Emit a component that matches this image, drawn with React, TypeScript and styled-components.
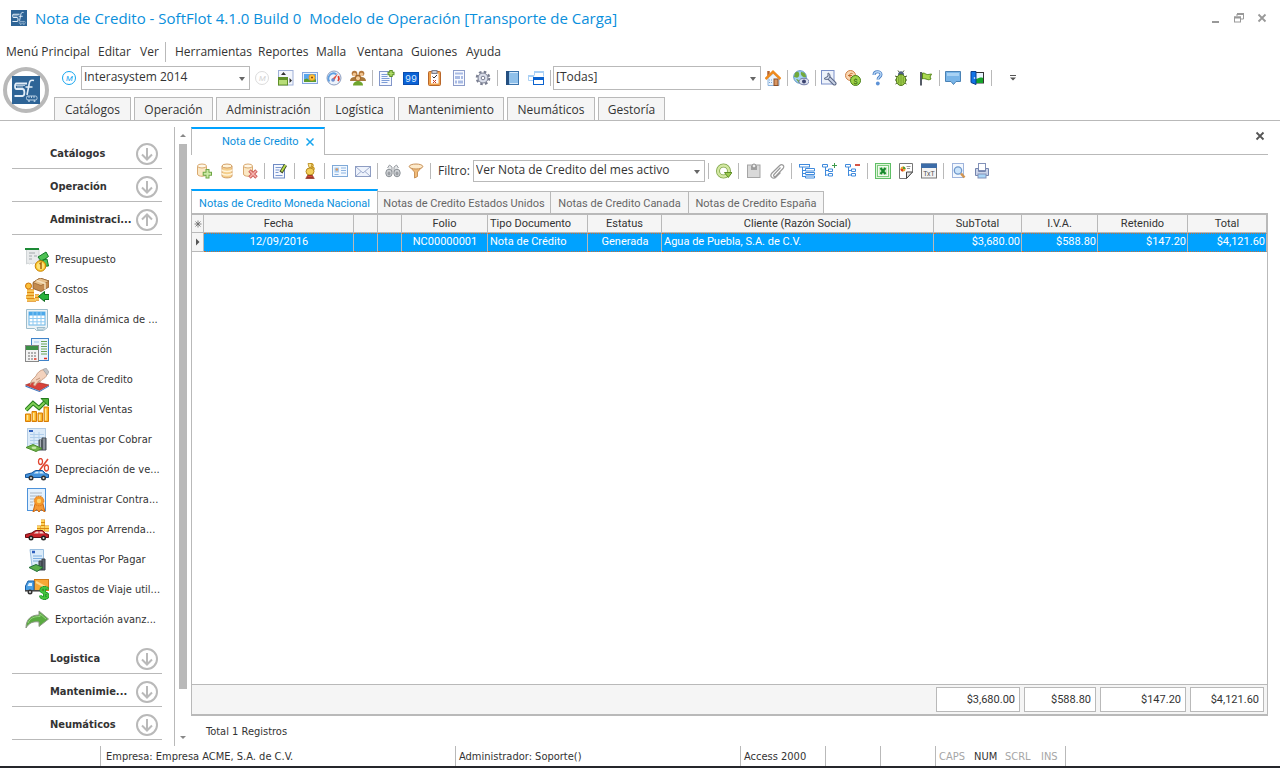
import React from "react";
import styled, { createGlobalStyle } from "styled-components";

const line = "#b9b9b9";
const blue = "#00a2ff";
const link = "#0a8fdc";
const ink = "#333333";
const ui = `"Open Sans", "Noto Sans", sans-serif`;
const side = `"DejaVu Sans Condensed", "DejaVu Sans", sans-serif`;
const gridFont = `Roboto, "Liberation Sans", sans-serif`;

const Global = createGlobalStyle`
  *, *::before, *::after { box-sizing: border-box; }
  body { margin: 0; background: #fff; color: ${ink}; font: 12px/16px ${ui}; }
  button, select { font: inherit; color: inherit; }
`;

/* ---------- drawings ---------- */

const art: Record<string, React.ReactNode> = {
  clock: (
    <>
      <circle cx="8" cy="8" r="6.500" fill="#fff" stroke="#16a5ef" />
      <text x="8.500" y="11" fontSize="8" textAnchor="middle" fill="#16a5ef" fontFamily="Roboto" fontStyle="italic">M</text>
    </>
  ),
  clockOff: (
    <>
      <circle cx="8" cy="8" r="6.500" fill="#fff" stroke="#dcdcdc" />
      <text x="8.500" y="11" fontSize="8" textAnchor="middle" fill="#d5d5d5" fontFamily="Roboto" fontStyle="italic">M</text>
    </>
  ),
  panelArrows: (
    <>
      <rect x="0.500" y="0.500" width="14.500" height="14.500" fill="#f3f6fc" stroke="#9fb0d8" />
      <rect x="0.500" y="7.500" width="9" height="7.500" fill="#b7dd78" stroke="#5f8f28" />
      <path d="M1 9h8" stroke="#5f8f28" strokeWidth="2" />
      <path d="M3 5l2.500-3L8 5zM11.500 8v5l2.500-2.500z" fill="#333" />
    </>
  ),
  photo: (
    <>
      <rect x="0.500" y="2.500" width="15" height="11" fill="#eaf3ff" stroke="#86a7e0" />
      <rect x="2" y="4" width="12" height="8" fill="#58a6ee" />
      <path d="M2 12V9.500l3-1 3 2 2-2 4 1V12z" fill="#5e9c2e" />
      <circle cx="10" cy="7.500" r="3.300" fill="#f0a01e" />
      <circle cx="10" cy="7.500" r="2.400" fill="#ffc843" />
      <circle cx="10" cy="7.500" r="1" fill="#8d3d09" />
    </>
  ),
  gauge: (
    <>
      <circle cx="8" cy="8" r="7" fill="#edf3fb" stroke="#8c9dc0" />
      <path d="M3.500 11.500a5 5 0 0 1 7-7" fill="none" stroke="#5f9fe0" strokeWidth="1.800" />
      <path d="M12.300 6a5 5 0 0 1-.3 5" fill="none" stroke="#df3b2d" strokeWidth="1.800" />
      <path d="M12 3.500L6 9l2 2z" fill="#e8523f" />
      <circle cx="7" cy="10" r="1.800" fill="#6d8fd0" />
    </>
  ),
  people: (
    <>
      <circle cx="4.500" cy="3.500" r="2.800" fill="#b57a3f" />
      <circle cx="11.500" cy="3.500" r="2.800" fill="#b57a3f" />
      <circle cx="4.500" cy="4.500" r="1.800" fill="#f2c48f" />
      <circle cx="11.500" cy="4.500" r="1.800" fill="#f2c48f" />
      <path d="M0 11c0-5 8-5 8-1 0-4 8-4 8 1z" fill="#a9773a" />
      <circle cx="8" cy="7.500" r="3" fill="#a4682b" />
      <circle cx="8" cy="8.300" r="2" fill="#f6cf9d" />
      <path d="M3 15.500c0-6 10-6 10 0z" fill="#6fa52e" />
    </>
  ),
  docPlus: (
    <>
      <rect x="0.500" y="1.500" width="12" height="14" fill="#f5f8ff" stroke="#8296c9" />
      <path d="M2.500 4.500h6M2.500 6.500h6M2.500 8.500h8M2.500 10.500h8M2.500 12.500h6" stroke="#7c9cd6" />
      <path d="M12 0v7M8.500 3.500h7" stroke="#5b8f27" strokeWidth="3.500" />
      <path d="M12 1v5M9.500 3.500h5" stroke="#b2dd6b" strokeWidth="1.500" />
    </>
  ),
  digits: (
    <>
      <rect x="0.500" y="2.500" width="15" height="12" fill="#0a62d6" stroke="#0a4cae" />
      <text x="8" y="12" fontSize="10" textAnchor="middle" fill="#d3e7ff" fontFamily="Liberation Mono">99</text>
    </>
  ),
  checklist: (
    <>
      <rect x="1.500" y="1.500" width="12" height="14" rx="1" fill="#efa04a" stroke="#b8662a" />
      <rect x="4" y="3.500" width="7.500" height="10" fill="#fff" />
      <rect x="5" y="0.500" width="5" height="3" fill="#c9cdd6" stroke="#7c828f" />
      <path d="M5.500 6.500L7 8l3-3" fill="none" stroke="#333" />
      <path d="M6 10l3 3M9 10l-3 3" stroke="#c83a25" />
    </>
  ),
  form: (
    <>
      <rect x="2.500" y="0.500" width="11" height="15" fill="#f8faff" stroke="#8c9cc9" />
      <path d="M4 3.500h8" stroke="#a9bbe4" strokeWidth="2" />
      <path d="M4 6h5v3H4zM10 6h2v3h-2zM4 10.500h2v3H4zM7 10.500h5v3H7z" fill="#a9bbe4" />
    </>
  ),
  gear: (
    <>
      <circle cx="8" cy="8" r="6.300" fill="none" stroke="#787d90" strokeWidth="2" strokeDasharray="2.600 2.350" />
      <circle cx="8" cy="8" r="5" fill="#dadeea" stroke="#787d90" />
      <circle cx="8" cy="8" r="1.800" fill="#fff" stroke="#787d90" />
    </>
  ),
  book: (
    <>
      <rect x="2.500" y="1.500" width="12" height="13" fill="#8fc0ea" stroke="#3a73ac" />
      <rect x="2" y="1" width="3" height="14" fill="#244f80" />
      <path d="M6 2.500h8M6 13.500h8" stroke="#d4e8fa" />
    </>
  ),
  windows: (
    <>
      <path d="M6.500 5.500v-4h9v5M5 10.500H.5v-5H6" fill="none" stroke="#a9d0f5" />
      <path d="M6 2h10M0 6h6" fill="none" stroke="#a9d0f5" strokeWidth="2" />
      <rect x="5.500" y="7.500" width="10" height="7" fill="#fff" stroke="#0a62cf" />
      <rect x="5" y="7" width="11" height="3" fill="#0a62cf" />
    </>
  ),
  home: (
    <>
      <path d="M3 8v7.500h11V8L8.500 3z" fill="#e9f3fd" stroke="#8db4de" />
      <rect x="9" y="9" width="4" height="6.500" fill="#d89562" stroke="#8c4f27" />
      <path d="M3.500 1v5" stroke="#b5642f" strokeWidth="2.500" />
      <path d="M0.500 9L8 1.800 15.500 9" fill="none" stroke="#ee8a1e" strokeWidth="2.500" />
      <path d="M4 10h3M4 12.500h3" stroke="#79a7d8" strokeDasharray="1 1" />
    </>
  ),
  globeEye: (
    <>
      <circle cx="7" cy="7" r="6.300" fill="#a3d2f3" stroke="#5f94c4" />
      <path d="M2 3c3-3 5 0 4 3s-4 1-5 1zM8 2c4 0 5 3 5 5-3 1-6-2-5-5zM3 9c3 0 4 3 3 4z" fill="#71a93a" />
      <ellipse cx="11" cy="11.500" rx="5" ry="3.300" fill="#dce1f0" stroke="#6f7aa6" />
      <circle cx="11" cy="11.500" r="2" fill="#3c4470" />
    </>
  ),
  wrench: (
    <>
      <rect x="0.500" y="0.500" width="12.500" height="13.500" fill="#edf2fb" stroke="#7b90c8" />
      <path d="M8 8l5.500 5.500" stroke="#5a6684" strokeWidth="4" strokeLinecap="round" />
      <path d="M8 8l5.500 5.500" stroke="#c8d2e6" strokeWidth="2" strokeLinecap="round" />
      <path d="M3 8.500c2 2 6 1 6-2.500 0-1.500-1-3-2-3l0 3-2 1.500z" fill="#c8d2e6" stroke="#5a6684" />
    </>
  ),
  coins: (
    <>
      <circle cx="5.500" cy="5.500" r="5" fill="#f9d6b0" stroke="#cf8046" />
      <path d="M7.500 3.500c-4-1-4 5 0 4M3 5.500h4" fill="none" stroke="#c06a2f" />
      <circle cx="10.500" cy="10.500" r="5" fill="#9ed44a" stroke="#487f17" />
      <text x="10.500" y="13.500" fontSize="8" textAnchor="middle" fill="#2e5c0d" fontFamily="Roboto">$</text>
    </>
  ),
  help: (
    <>
      <path d="M5 5c0-4.500 7-4 7-.5 0 2.500-3 2.500-3 5" fill="none" stroke="#4a7fc4" strokeWidth="3" />
      <path d="M5 5c0-4.500 7-4 7-.5 0 2.500-3 2.500-3 5" fill="none" stroke="#b7d6f6" strokeWidth="1.400" />
      <circle cx="8.800" cy="13.500" r="1.900" fill="#5d92d6" />
    </>
  ),
  bug: (
    <>
      <path d="M2 6l3 1M14 6l-3 1M2 10h3M14 10h-3M2.500 14l3-2M13.500 14l-3-2M5 .5l1.500 2M11 .5l-1.500 2" stroke="#4d5a33" />
      <path d="M5 5c0-5 6-5 6 0z" fill="#4f6080" />
      <ellipse cx="8" cy="10" rx="4.800" ry="5.500" fill="#a8d350" stroke="#4f7a18" />
      <path d="M8 5v10M5.800 6.500v7M10.200 6.500v7" stroke="#6b9a2b" />
    </>
  ),
  flag: (
    <>
      <path d="M4 2v13.500" stroke="#555b66" strokeWidth="2" />
      <path d="M5.500 3c3 0 3 1.500 5 1.500s3-.5 4-.5l-1.500 3 1 2c-3 1.500-3 .5-5 0s-3-.5-3.500 0z" fill="#a9d84f" stroke="#57881b" />
    </>
  ),
  chat: (
    <>
      <path d="M0.500 1.500h15v10H11l-2.500 3-2.500-3H.5z" fill="#79b5e8" stroke="#4a82b5" />
      <path d="M2 3h12v3H2z" fill="#a8d2f4" />
    </>
  ),
  door: (
    <>
      <rect x="6" y="2.500" width="8.500" height="10.500" fill="#eaf5ff" stroke="#333" />
      <path d="M7 9c3-1 5-2 7-1v5H7z" fill="#17a32b" />
      <path d="M2 1.500h5v13l-5-2z" fill="#1173e6" stroke="#0a3f8d" />
      <circle cx="5.500" cy="8" r="0.800" fill="#fff" />
    </>
  ),
  dbAdd: (
    <>
      <path d="M1.500 3v8c0 3 9 3 9 0V3" fill="#fbe8c4" stroke="#d9a970" />
      <ellipse cx="6" cy="3" rx="4.500" ry="2" fill="#fff8e8" stroke="#d9a970" />
      <path d="M11.500 6v9.500M6.700 10.800h9.300" stroke="#6ea644" strokeWidth="4" />
      <path d="M11.500 7v7.500M7.700 10.800h7.300" stroke="#cbe9a5" strokeWidth="2" />
    </>
  ),
  db: (
    <>
      <path d="M3 3v10c0 2.500 10 2.500 10 0V3" fill="#f5cf8c" stroke="#d3a068" />
      <path d="M3 6.500c0 2.500 10 2.500 10 0M3 10c0 2.500 10 2.500 10 0" fill="none" stroke="#fff3d9" strokeWidth="1.500" />
      <ellipse cx="8" cy="3" rx="5" ry="2" fill="#fff4da" stroke="#d3a068" />
    </>
  ),
  dbDel: (
    <>
      <path d="M1.500 3v8c0 3 9 3 9 0V3" fill="#fbe8c4" stroke="#d9a970" />
      <ellipse cx="6" cy="3" rx="4.500" ry="2" fill="#fff8e8" stroke="#d9a970" />
      <path d="M7.500 7.500l7 7M14.500 7.500l-7 7" stroke="#cf5f5a" strokeWidth="3.500" />
      <path d="M8 8l6 6M14 8l-6 6" stroke="#f6b3ae" strokeWidth="1.500" />
    </>
  ),
  edit: (
    <>
      <rect x="1.500" y="1.500" width="11" height="13.500" fill="#f5f8ff" stroke="#6f8bc4" />
      <path d="M3.500 4.500h6M3.500 7h4M3.500 9.500h3M3.500 12.500h7" stroke="#7d9ad0" />
      <path d="M13.500 2L9 9.500" stroke="#3f4a2b" strokeWidth="3.500" />
      <path d="M13.500 2L9.500 8.500" stroke="#b9dd4c" strokeWidth="1.800" />
    </>
  ),
  stamp: (
    <>
      <path d="M8 0.500c4 0 4 3 1 3.500 4 0 4 3 1 3.500" fill="none" stroke="#c9971b" strokeWidth="1.300" />
      <path d="M6 .5h4l-1 4H7z" fill="#f8df85" stroke="#b78a1d" strokeWidth=".8" />
      <ellipse cx="8" cy="8.500" rx="4" ry="3.500" fill="#f3d05c" stroke="#b78a1d" />
      <path d="M5.500 12.500h5l1 2h-7z" fill="#d94a35" stroke="#8c2617" strokeWidth=".8" />
      <path d="M3.500 15.300h9" stroke="#8c2617" />
    </>
  ),
  card: (
    <>
      <rect x="0.500" y="2.500" width="15" height="11" fill="#f2f8fe" stroke="#7fa9d8" />
      <rect x="2.500" y="4.500" width="4.500" height="5" fill="#a8ccf0" />
      <circle cx="4.800" cy="6.500" r="1.300" fill="#d59762" />
      <path d="M9 5h5M9 7.500h5M9 10h5M2.500 11.500h4" stroke="#8db4e2" />
    </>
  ),
  mail: (
    <>
      <rect x="0.500" y="3.500" width="15" height="10" fill="#eef3fc" stroke="#8e9dc2" />
      <path d="M1 4l7 6 7-6M1 13l5-4.500M15 13l-5-4.500" fill="none" stroke="#9fadce" />
    </>
  ),
  binoculars: (
    <>
      <path d="M2.500 5l2-3 2.500 2v5M13.500 5l-2-3L9 4v5" fill="#e6e8ea" stroke="#9a9ea3" />
      <ellipse cx="4" cy="10" rx="3.200" ry="3.800" fill="#cfd2d6" stroke="#8b9095" />
      <ellipse cx="12" cy="10" rx="3.200" ry="3.800" fill="#cfd2d6" stroke="#8b9095" />
      <ellipse cx="4" cy="10.500" rx="1.500" ry="2" fill="#9a9ea3" />
      <ellipse cx="12" cy="10.500" rx="1.500" ry="2" fill="#9a9ea3" />
    </>
  ),
  funnel: (
    <>
      <path d="M1.500 3.500L6.500 9v6l3-1.500V9l5-5.500z" fill="#f1bb78" stroke="#c8925a" />
      <ellipse cx="8" cy="3.500" rx="6.800" ry="2.500" fill="#fdeacb" stroke="#c8925a" />
    </>
  ),
  refresh: (
    <>
      <circle cx="7.500" cy="8" r="5.500" fill="none" stroke="#7da348" strokeWidth="4" />
      <circle cx="7.500" cy="8" r="5.500" fill="none" stroke="#d3e8a2" strokeWidth="2.400" />
      <path d="M8.500 9.500H16l-3.700 5z" fill="#9bcb50" stroke="#5f8f28" />
    </>
  ),
  clipboard: (
    <>
      <rect x="1.500" y="2" width="12.500" height="12.500" fill="#d9d9d9" stroke="#a5a5a5" />
      <path d="M5 3h6v4H5z" fill="#a0a0a0" />
      <circle cx="8" cy="3" r="2" fill="#ececec" stroke="#8f8f8f" />
    </>
  ),
  clip: (
    <path
      d="M11.500 4.500L5 11.500c-1.200 1.200.6 3 1.800 1.700L14 5.500c2.300-2.500-1-5.300-3.300-3L3 10c-3 3.300 1.200 7 4 4l4.500-4.500"
      fill="none" stroke="#9a9a9a" strokeWidth="1.200"
    />
  ),
  tree: (
    <>
      <path d="M3.500 4v10M3.500 7.500h3M3.500 10.500h3M3.500 13.500h3" fill="none" stroke="#3f8add" />
      <rect x="0.500" y="1.500" width="10" height="2.500" fill="#fff" stroke="#3f8add" />
      <path d="M6.500 5.500h9v2.500h-9zM6.500 9.500h9v2h-9zM6.500 13h9v2h-9z" fill="#fff" stroke="#3f8add" />
    </>
  ),
  treeAdd: (
    <>
      <path d="M3.500 4v9M3.500 7.500h3M3.500 12h3" fill="none" stroke="#3f8add" />
      <path d="M.5 1.500h5V4h-5zM6.500 6h4v2.500h-4zM6.500 10.500h4V13h-4z" fill="#fff" stroke="#3f8add" />
      <path d="M12.500 0v5M10 2.500h5" stroke="#3c9a4a" />
    </>
  ),
  treeDel: (
    <>
      <path d="M3.500 4v9M3.500 7.500h3M3.500 12h3" fill="none" stroke="#3f8add" />
      <path d="M.5 1.500h5V4h-5zM6.500 6h4v2.500h-4zM6.500 10.500h4V13h-4z" fill="#fff" stroke="#3f8add" />
      <path d="M10 2h5" stroke="#d2412f" strokeWidth="1.800" />
    </>
  ),
  excel: (
    <>
      <rect x="0.500" y="0.500" width="15" height="15" fill="#dff5da" stroke="#5fbf66" />
      <rect x="2.500" y="2.500" width="11" height="11" fill="#f3fbf1" stroke="#7ccb7d" />
      <rect x="4" y="4" width="8" height="8" fill="#cdebc6" />
      <path d="M5.500 5l5 6M10.500 5l-5 6" stroke="#178a2d" strokeWidth="2.200" />
    </>
  ),
  report: (
    <>
      <path d="M1.500 0.500h13V9L8.500 15.500h-7z" fill="#fff" stroke="#777" />
      <path d="M14.500 9h-6v6.500z" fill="#e6e6e6" stroke="#444" />
      <path d="M8.500 3.500h4M9 5.500h3" stroke="#999" />
      <circle cx="5" cy="6" r="2.500" fill="#f0a02e" />
      <path d="M5 6V3.500A2.500 2.500 0 0 1 7.500 6z" fill="#4ba03c" />
      <path d="M5 6v2.500A2.500 2.500 0 0 1 2.500 6z" fill="#d8402c" />
    </>
  ),
  txt: (
    <>
      <rect x="0.500" y="1" width="15" height="14" fill="#f4f4f4" stroke="#777" />
      <rect x="0" y="0.500" width="16" height="4.500" fill="#3c6ca8" />
      <text x="8" y="12.500" fontSize="7" textAnchor="middle" fill="#555" fontFamily="Roboto">TxT</text>
    </>
  ),
  preview: (
    <>
      <rect x="1.500" y="0.500" width="11" height="14" fill="#f3f8fe" stroke="#9fb4dc" />
      <circle cx="7" cy="7.500" r="3.700" fill="#cbe4fa" stroke="#6f98cc" strokeWidth="1.300" />
      <path d="M10 10.500L13.500 14.500" stroke="#d09452" strokeWidth="2.500" />
    </>
  ),
  printer: (
    <>
      <rect x="4.500" y="0.500" width="7" height="7" fill="#fff" stroke="#8291b8" />
      <path d="M1.500 5.500h3v3h7v-3h3v7h-13z" fill="#ccd5ea" stroke="#7484ad" />
      <rect x="4" y="11" width="8" height="4" fill="#a8d5f7" stroke="#8291b8" />
    </>
  ),
};

const sideArt: Record<string, React.ReactNode> = {
  budget: (
    <>
      <path d="M1.500 1v15l1.500-1 1.500 1 1.500-1 1.500 1 1.500-1 5 1V1z" fill="#e9ebec" stroke="#d0d4d6" />
      <path d="M0 1h14" stroke="#1d8a36" strokeWidth="2" />
      <path d="M4 5h6M4 8h3M9 8h3M4 11h3" stroke="#a2a8ac" />
      <path d="M13 9l8-5 2.500 4.500-7 5zM14 13l8-2 1.500 7-8 .5z" fill="#4fc255" stroke="#117a26" />
      <circle cx="15.500" cy="18" r="5.300" fill="#fbc92d" stroke="#c98208" />
      <circle cx="15.500" cy="18" r="3.700" fill="#fde17a" />
      <path d="M14.500 16l1.500-1v6" fill="none" stroke="#a9650a" strokeWidth="1.500" />
    </>
  ),
  costs: (
    <>
      <path d="M8 4.500L15 0l9 3v6l-8 4.500-8-3z" fill="#c38a4e" stroke="#8a5726" strokeWidth=".8" />
      <path d="M8 4.500l8 3 8-4.500-9-3z" fill="#e8c18c" stroke="#8a5726" strokeWidth=".6" />
      <path d="M11.500 2.500l8.500 3v6" fill="none" stroke="#f5e0bd" strokeWidth="1.500" />
      <circle cx="3.500" cy="8" r="3" fill="#fcbf3b" stroke="#cf7608" />
      <path d="M2 13h7M2 16h7M1 19h8M2 22h9M10 18h4M10 21h4" stroke="#e18a14" strokeWidth="3.500" />
      <path d="M2 13h7M2 16h7M1 19h8M2 22h9M10 18h4M10 21h4" stroke="#fdd76b" strokeWidth="1.700" />
      <path d="M13.500 18.500l6-5v3H24v5h-4.500v2z" fill="#28b23a" stroke="#0d6b1c" />
    </>
  ),
  grid: (
    <>
      <path d="M1.500 1.500h21v18l-4 3h-7l-2-2h-8z" fill="#eef4f7" stroke="#9dbccb" />
      <rect x="4" y="4" width="16" height="13" fill="#fff" stroke="#68b4e5" />
      <rect x="4" y="4" width="16" height="3.500" fill="#4ba8ea" />
      <path d="M4 10.500h16M4 13.800h16M8 4v13M12 4v13M16 4v13" stroke="#8fcaf2" />
      <path d="M12 19.500h8l-2.500 2.500H13z" fill="#d4e3ea" stroke="#9dbccb" />
    </>
  ),
  invoice: (
    <>
      <rect x="6.500" y="0.500" width="17" height="22" fill="#eaf4fd" stroke="#3f83c9" />
      <path d="M9 4h5" stroke="#b7d4f0" strokeWidth="1.500" />
      <path d="M16 3.500h6M16 6h6M16 8.500h6M16 11h6M16 13.500h6M16 16h6" stroke="#6aa457" />
      <path d="M19 20.500h3" stroke="#dd2f23" strokeWidth="1.500" />
      <rect x="0.500" y="7.500" width="13" height="16" fill="#f3f3f3" stroke="#888" />
      <rect x="1" y="8" width="12" height="4" fill="#3b8f45" />
      <path d="M3 15h2M6 15h2M9 15h2M3 18h2M6 18h2M9 18h2M3 21h2M6 21h2" stroke="#999" strokeWidth="1.500" />
      <path d="M9 21h2.500" stroke="#e03524" strokeWidth="1.500" />
    </>
  ),
  hand: (
    <>
      <path d="M0.500 17l9-3.500L24 17l-9.500 5.500z" fill="#d8423a" stroke="#9b2018" strokeWidth=".6" />
      <path d="M0.500 17.500l14 5.500 9.500-5.500v1L14.500 24 .5 18.700z" fill="#3b74c0" />
      <path d="M5 16l2-4 4-4c1-3 4-6 8-6.500l3 5c-1 3-3 4-5 5-1 2-3 3-5 3.500l-2 3-1.500-1 1-3-3 .5-1 2z" fill="#f3d2bd" stroke="#c29479" strokeWidth=".8" />
      <path d="M11 12l4-2M12.500 14l3-2" stroke="#c29479" />
      <path d="M18 1.500l3-1.500 3 4-2 3z" fill="#c3c4c7" stroke="#97989b" strokeWidth=".6" />
    </>
  ),
  chart: (
    <>
      <path d="M0.500 16h5v7.500h-5zM7 13.500h4.500v10H7zM13 15h4.500v8.500H13zM19 9h4.500v14.500H19z" fill="#fbb425" stroke="#d87c06" />
      <path d="M2.500 17v5M8.700 15v7M14.700 16.500v6M20.700 10.500v12" stroke="#ffe79a" strokeWidth="1.500" />
      <path d="M1 12l7-7 6 5 6-6" fill="none" stroke="#237b1c" strokeWidth="4" />
      <path d="M1 12l7-7 6 5 6-6" fill="none" stroke="#80d056" strokeWidth="2" />
      <path d="M16 0.500h7.500V8z" fill="#50b33a" stroke="#237b1c" />
    </>
  ),
  receivable: (
    <>
      <rect x="2.500" y="0.500" width="18" height="19" fill="#dcebf9" stroke="#b3cbe3" />
      <path d="M4 3h4" stroke="#2f5fbd" strokeWidth="2" />
      <path d="M5 6.500h14M5 9.500h14M5 12.500h9M5 15.500h8M9 4v13M14 4v12" stroke="#b2cfeb" />
      <path d="M14 12h3v10h-3zM17 10h4v12h-4z" fill="#737b84" stroke="#474e56" />
      <path d="M15.500 12v9M19 10.500v11" stroke="#a9b0b7" />
      <path d="M1 19.500l7-3 9 4-6 3z" fill="#70b548" stroke="#4b8d2d" />
      <ellipse cx="9" cy="19.800" rx="2.500" ry="1.200" fill="#c4e6a8" />
    </>
  ),
  depreciation: (
    <>
      <path d="M23 1L14 13" stroke="#e0452f" strokeWidth="1.500" />
      <ellipse cx="15.500" cy="3.500" rx="2" ry="3" fill="none" stroke="#e0452f" strokeWidth="1.300" />
      <ellipse cx="21.500" cy="10" rx="2" ry="3" fill="none" stroke="#e0452f" strokeWidth="1.300" />
      <path d="M0.500 19.500v-3l6-1.500 4-2.500h7l3 3 3 1v3z" fill="#4392db" stroke="#14569d" />
      <path d="M8.500 15.500l3-2h2v2zM14.500 13.500H17l2 2h-4.500z" fill="#d7ecfb" />
      <circle cx="6" cy="20" r="2.500" fill="#333" /><circle cx="6" cy="20" r="1" fill="#ddd" />
      <circle cx="18.500" cy="20" r="2.500" fill="#333" /><circle cx="18.500" cy="20" r="1" fill="#ddd" />
    </>
  ),
  contract: (
    <>
      <rect x="2.500" y="0.500" width="18" height="22" fill="#e6f2fd" stroke="#4d92da" />
      <path d="M5 5h12M5 8h12M5 11h4M5 14h3M5 17h3" stroke="#a9b5c2" />
      <path d="M10 16l-2 8 4-2.500 2 2.500 2-2.500L20 24l-2-8z" fill="#f59a35" stroke="#cc650c" />
      <circle cx="14" cy="13" r="4.800" fill="#f79a2b" stroke="#d9761a" strokeDasharray="1.500 .8" />
      <circle cx="14" cy="13" r="2.200" fill="#ffd36a" />
    </>
  ),
  lease: (
    <>
      <path d="M12 12h4M12 9h4M16 12h4M16 9h4M16 6h4M16 3h4M20 12h4M20 9h4" stroke="#d98a12" strokeWidth="3" />
      <path d="M12 12h3.500M12 9h3.500M16 12h3.500M16 9h3.500M16 6h3.500M16 3h3.500M20 12h4M20 9h4" stroke="#fdd560" strokeWidth="1.800" />
      <path d="M0.500 19.500v-3l6-1.500 4-2.500h7l3 3 3 1v3z" fill="#c9242b" stroke="#6f0c12" />
      <path d="M8.500 15.500l3-2h2v2zM14.500 13.500H17l2 2h-4.500z" fill="#f1d4d4" />
      <circle cx="6" cy="20" r="2.500" fill="#222" /><circle cx="6" cy="20" r="1" fill="#ddd" />
      <circle cx="18.500" cy="20" r="2.500" fill="#222" /><circle cx="18.500" cy="20" r="1" fill="#ddd" />
    </>
  ),
  payable: (
    <>
      <path d="M5 1.500h13.500V18H7z" fill="#dcecfa" stroke="#9bbfe0" />
      <path d="M7 4h3" stroke="#2f5fbd" strokeWidth="2.500" />
      <path d="M8 8h9M8 10.500h9M8 13h6" stroke="#7daee0" />
      <path d="M14 13h3v9h-3zM17 11h3v11h-3z" fill="#5c656f" stroke="#3a4148" />
      <path d="M4 19.500l7-3 7 3-6 4z" fill="#59ad4a" stroke="#23703a" />
    </>
  ),
  travel: (
    <>
      <rect x="9.500" y="1.500" width="14" height="11" fill="#f7a835" stroke="#cf7a18" />
      <path d="M11 4l11 6" stroke="#ffd98c" strokeWidth="2" />
      <path d="M0.500 12.500V8L3 3h6v9.500z" fill="#4a9fe3" stroke="#1a5ea6" />
      <path d="M2.500 8L4 5h3v3z" fill="#dff0fd" />
      <path d="M0 12.800h15" stroke="#444" strokeWidth="1.500" />
      <circle cx="5" cy="14" r="2.500" fill="#333" /><circle cx="5" cy="14" r="1" fill="#ddd" />
      <path d="M23 11.500c-1-3-7.500-2.500-7 1 .5 3 7 1.500 7 5 0 3.500-7 3.500-7.500 0M19.500 8v14" fill="none" stroke="#148a26" strokeWidth="3" />
      <path d="M23 11.500c-1-3-7.500-2.500-7 1 .5 3 7 1.500 7 5 0 3.500-7 3.500-7.500 0M19.500 8.500v13" fill="none" stroke="#46c43c" strokeWidth="1.800" />
    </>
  ),
  exportArrow: (
    <>
      <path d="M1 20C1 11 6 7 14 7V3l9.500 8-9.500 7.500V14C8 13 4 15 1 20z" fill="#5aab41" stroke="#8f9a88" />
      <path d="M3 15c2-5 6-6.500 12-6.500V6l6 5" fill="none" stroke="#93cf7c" />
    </>
  ),
};

const Svg = styled.svg<{ $size: number }>`
  display: block;
  flex: none;
  width: ${(p) => p.$size}px;
  height: ${(p) => p.$size}px;
`;
const Icon = ({ name }: { name: string }) => (
  <Svg $size={16} viewBox="0 0 16 16" aria-hidden="true">{art[name]}</Svg>
);
const SideIcon = ({ name }: { name: string }) => (
  <Svg $size={24} viewBox="0 0 24 24" aria-hidden="true">{sideArt[name]}</Svg>
);
const LogoArt = () => (
  <>
    <rect width="28" height="28" fill="#2e6496" />
    <g fill="none" stroke="#e3eef8">
      <path d="M15 7.500H4.500c-2 0-2 5.500 0 5.500h6c2.500 0 2.500 7 0 7H2.500" strokeWidth="1.800" />
      <path d="M4 9.500h9M5 11h6" strokeWidth=".7" />
      <path d="M22 4.500c-4-1-4.500 1-5 4.500l-2 10M13.500 11h7" strokeWidth="1.600" />
      <rect x="14.500" y="20" width="10.500" height="4" rx="1.500" stroke="#b9d0e4" />
      <path d="M17 20v2M19.500 20v2M22 20v2" stroke="#b9d0e4" />
    </g>
    <circle cx="17" cy="25" r="1" fill="#b9d0e4" />
    <circle cx="22.500" cy="25" r="1" fill="#b9d0e4" />
  </>
);

/* ---------- frame ---------- */

const Page = styled.div`
  display: flex;
  flex-direction: column;
  min-height: 100vh;
`;
const TitleBar = styled.header`
  display: flex;
  align-items: center;
  gap: 8px;
  height: 38px;
  padding: 0 7px 2px 11px;
`;
const Title = styled.h1`
  flex: 1;
  margin: 0;
  font-size: 15px;
  line-height: 20px;
  font-weight: 400;
  white-space: pre;
  color: ${link};
`;
const IconButton = styled.button<{ $w?: number; $h?: number }>`
  display: flex;
  align-items: center;
  justify-content: center;
  flex: none;
  width: ${(p) => p.$w ?? 24}px;
  height: ${(p) => p.$h ?? 22}px;
  padding: 0;
  border: 0;
  background: none;
`;
const WindowButtons = styled.div`
  display: flex;
`;
const MenuBar = styled.nav`
  display: grid;
  grid-template-columns: 92px 42px 25px 10px 83px 58px 41px 54px 55px auto;
  align-items: center;
  justify-content: start;
  height: 28px;
  padding-left: 6px;
`;
const MenuItem = styled.button`
  padding: 0;
  border: 0;
  background: none;
  text-align: left;
  white-space: nowrap;
`;
const MenuRule = styled.span`
  width: 1px;
  height: 20px;
  background: ${line};
`;
const Ribbon = styled.div`
  display: flex;
  height: 55px;
  border-bottom: 1px solid ${line};
`;
const LogoButton = styled.button`
  flex: none;
  display: grid;
  place-items: center;
  width: 46px;
  height: 46px;
  margin: 1px 7px 0 3px;
  padding: 0;
  border: 4px solid ${line};
  border-radius: 50%;
  background: #fff;
`;
const RibbonRows = styled.div`
  flex: 1;
  display: flex;
  flex-direction: column;
  justify-content: space-between;
  margin-bottom: -1px;
`;
const Tools = styled.div`
  display: flex;
  align-items: center;
`;
const Sep = styled.span<{ $w: number }>`
  flex: none;
  width: 1px;
  height: 16px;
  margin: 0 ${(p) => Math.floor((p.$w - 1) / 2)}px 0 ${(p) => Math.ceil((p.$w - 1) / 2)}px;
  background: ${line};
`;
const SelectBox = styled.span<{ $w: number; $h: number }>`
  position: relative;
  flex: none;
  width: ${(p) => p.$w}px;
  height: ${(p) => p.$h}px;

  &::after {
    content: "";
    position: absolute;
    right: 5px;
    top: calc(50% - 1px);
    border: 3px solid transparent;
    border-top: 4px solid #666;
    border-bottom: 0;
    pointer-events: none;
  }
`;
const Select = styled.select`
  appearance: none;
  width: 100%;
  height: 100%;
  padding: 0 16px 2px 2px;
  border: 1px solid ${line};
  border-radius: 0;
  background: #fff;
`;
const Modules = styled.nav`
  display: flex;
  gap: 3px;
  margin-left: -2px;
`;
const ModuleTab = styled.button<{ $w: number }>`
  width: ${(p) => p.$w}px;
  height: 24px;
  padding: 2px 0 0;
  border: 1px solid ${line};
  background: #f5f5f5;
  white-space: nowrap;
`;

const Body = styled.div`
  flex: 1;
  display: flex;
  padding-top: 6px;
`;

/* ---------- side bar ---------- */

const Side = styled.aside`
  flex: none;
  width: 175px;
  padding: 9px 12px 0;
  border-right: 1px solid ${line};
  font: 11px/16px ${side};
`;
const SectionHead = styled.button`
  display: flex;
  align-items: center;
  justify-content: space-between;
  width: 150px;
  height: 33px;
  padding: 4px 3px 0 38px;
  border: 0;
  border-bottom: 1px solid ${line};
  background: none;
  font-weight: 700;
  white-space: nowrap;
`;
const SideList = styled.ul`
  margin: 0;
  padding: 9px 0 7px 13px;
  list-style: none;
`;
const SideLink = styled.a`
  display: flex;
  align-items: center;
  gap: 6px;
  height: 30px;
  padding-top: 1px;
  color: ${ink};
  text-decoration: none;
  white-space: nowrap;
`;
const ScrollTrack = styled.div`
  flex: none;
  display: flex;
  flex-direction: column;
  align-items: center;
  width: 16px;
  padding: 7px 0;
`;
const ScrollThumb = styled.div`
  flex: 1;
  width: 8px;
  margin: 7px 0 47px;
  background: ${line};
`;
const Arrow = styled.span<{ $up?: boolean }>`
  border: 3px solid transparent;
  ${(p) => (p.$up ? "border-top: 0; border-bottom-color: #888;" : "border-bottom: 0; border-top-color: #888;")}
`;

const SectionArrow = ({ open }: { open: boolean }) => (
  <Svg $size={24} viewBox="0 0 24 24" fill="none" stroke={line} strokeWidth="2" aria-hidden="true">
    <circle cx="12" cy="12" r="10" />
    {open ? <path d="M12 18V7M7 11.500L12 6.500l5 5" /> : <path d="M12 6v11M7 12.500l5 5 5-5" />}
  </Svg>
);
const Section = ({ label, open = false }: { label: string; open?: boolean }) => (
  <SectionHead type="button" aria-expanded={open}>
    {label}
    <SectionArrow open={open} />
  </SectionHead>
);

/* ---------- document ---------- */

const Main = styled.main`
  flex: 1;
  min-width: 0;
  display: flex;
  flex-direction: column;
  padding-right: 12px;
`;
const DocTabs = styled.div`
  display: flex;
  height: 28px;
`;
const DocTab = styled.div`
  display: flex;
  align-items: center;
  gap: 4px;
  width: 134px;
  padding-left: 30px;
  border: 1px solid ${line};
  border-top: 2px solid ${blue};
  border-bottom: 0;
  color: ${link};
  font: 11px/16px ${gridFont};
  white-space: nowrap;
`;
const DocRest = styled.div`
  flex: 1;
  display: flex;
  justify-content: flex-end;
  align-items: flex-start;
  border-bottom: 1px solid ${line};
`;
const DocTools = styled(Tools)`
  height: 34px;
  padding: 0 0 2px 1px;
`;
const FilterLabel = styled.label`
  width: 39px;
  padding-left: 4px;
  white-space: nowrap;
`;
const SubTabs = styled.div`
  display: flex;
  align-items: flex-end;
  height: 24px;
  font: 11px/16px ${gridFont};
`;
const SubTab = styled.button<{ $w: number; $on?: boolean }>`
  width: ${(p) => p.$w}px;
  height: ${(p) => (p.$on ? 24 : 22)}px;
  padding: ${(p) => (p.$on ? 3 : 2)}px 0 0;
  border: 1px solid ${line};
  border-bottom: 0;
  border-left-width: ${(p) => (p.$on ? 1 : 0)}px;
  ${(p) => p.$on && `border-top: 2px solid ${blue};`}
  background: ${(p) => (p.$on ? "#fff" : "#f5f5f5")};
  color: ${(p) => (p.$on ? link : "#666")};
  white-space: nowrap;
`;
const GridPanel = styled.section`
  flex: 1;
  display: flex;
  flex-direction: column;
  border: solid ${line};
  border-width: 2px 1px 2px 1px;
  font: 11px/16px ${gridFont};
`;
const GridTable = styled.table`
  width: 100%;
  table-layout: fixed;
  border-collapse: separate;
  border-spacing: 0;
`;
const Th = styled.th<{ $align?: string }>`
  height: 18px;
  padding: 0 2px;
  border: solid ${line};
  border-width: 0 1px 1px 0;
  background: #f5f5f5;
  font-weight: 400;
  text-align: ${(p) => p.$align ?? "center"};
  line-height: 16px;
  white-space: nowrap;
  overflow: hidden;
`;
const Td = styled.td<{ $align?: string }>`
  height: 19px;
  padding: 0 1px 1px 2px;
  border: dotted #c2703a;
  border-width: 1px 0;
  border-right: 1px solid ${line};
  background: ${blue};
  color: #fff;
  text-align: ${(p) => p.$align ?? "center"};
  line-height: 16px;
  white-space: nowrap;
`;
const RowMark = styled.th`
  padding: 0 0 0 2px;
  border: solid ${line};
  border-width: 0 1px 1px 0;
  background: #f5f5f5;
`;
const Totals = styled.div`
  display: flex;
  justify-content: flex-end;
  gap: 4px;
  margin-top: auto;
  padding: 2px 3px 2px 2px;
  border-top: 1px solid ${line};
  background: #f5f5f5;
`;
const TotalBox = styled.output<{ $w: number }>`
  width: ${(p) => p.$w}px;
  height: 25px;
  padding-right: 4px;
  border: 1px solid ${line};
  background: #fff;
  line-height: 24px;
  text-align: right;
`;
const Count = styled.p`
  margin: 0;
  padding: 8px 15px 6px;
  font: 11px/16px ${side};
`;

/* ---------- status bar ---------- */

const StatusBar = styled.footer`
  display: flex;
  height: 22px;
  border-bottom: 2px solid #25262b;
  font: 11px/20px ${side};
`;
const StatusCell = styled.span<{ $w: number; $pad?: number }>`
  width: ${(p) => p.$w}px;
  padding: 2px 0 0 ${(p) => p.$pad ?? 3}px;
  border-right: 1px solid ${line};
  line-height: 18px;
  white-space: nowrap;
`;
const Keys = styled(StatusCell)`
  display: grid;
  grid-template-columns: 35px 31px 36px auto;
`;
const Key = styled.span<{ $on?: boolean }>`
  color: ${(p) => (p.$on ? ink : "#a6a6a6")};
`;

const ToolRow = ({ items, cell, sep }: { items: string[]; cell: number; sep: number }) => (
  <>
    {items.map((n, i) =>
      n === "|" ? (
        <Sep key={i} $w={sep} />
      ) : (
        <IconButton key={i} type="button" $w={cell} aria-label={n}>
          <Icon name={n} />
        </IconButton>
      )
    )}
  </>
);

const menus = ["Menú Principal", "Editar", "Ver", "", "Herramientas", "Reportes", "Malla", "Ventana", "Guiones", "Ayuda"];
const modules: [string, number][] = [
  ["Catálogos", 77], ["Operación", 79], ["Administración", 105], ["Logística", 71],
  ["Mantenimiento", 106], ["Neumáticos", 88], ["Gestoría", 67],
];
const adminItems: [string, string][] = [
  ["budget", "Presupuesto"], ["costs", "Costos"], ["grid", "Malla dinámica de ..."], ["invoice", "Facturación"],
  ["hand", "Nota de Credito"], ["chart", "Historial Ventas"], ["receivable", "Cuentas por Cobrar"],
  ["depreciation", "Depreciación de ve..."], ["contract", "Administrar Contra..."], ["lease", "Pagos por Arrenda..."],
  ["payable", "Cuentas Por Pagar"], ["travel", "Gastos de Viaje util..."], ["exportArrow", "Exportación avanz..."],
];
const columns: [string, number | undefined, string?][] = [
  ["Fecha", 150], ["", 24], ["", 24], ["Folio", 86], ["Tipo Documento", 100, "left"], ["Estatus", 74],
  ["Cliente (Razón Social)", undefined], ["SubTotal", 88], ["I.V.A.", 76], ["Retenido", 90], ["Total", 79],
];
const row: [string, string?][] = [
  ["12/09/2016"], [""], [""], ["NC00000001"], ["Nota de Crédito", "left"], ["Generada"],
  ["Agua de Puebla, S.A. de C.V.", "left"], ["$3,680.00", "right"], ["$588.80", "right"],
  ["$147.20", "right"], ["$4,121.60", "right"],
];

export default function App() {
  return (
    <Page>
      <Global />
      <TitleBar>
        <Svg $size={16} viewBox="0 0 28 28" aria-hidden="true"><LogoArt /></Svg>
        <Title>{"Nota de Credito - SoftFlot 4.1.0 Build 0  Modelo de Operación [Transporte de Carga]"}</Title>
        <WindowButtons>
          <IconButton type="button" $w={23} aria-label="Minimizar">
            <Svg $size={10} viewBox="0 0 10 10"><path d="M1 9h7" stroke="#999" strokeWidth="2" /></Svg>
          </IconButton>
          <IconButton type="button" $w={23} aria-label="Restaurar">
            <Svg $size={10} viewBox="0 0 10 10" fill="none" stroke="#999">
              <path d="M3 3V1h6.500v5H7" /><path d="M3 1h7M0 4.500h7" strokeWidth="2" /><rect x=".5" y="4" width="6" height="5" />
            </Svg>
          </IconButton>
          <IconButton type="button" $w={23} aria-label="Cerrar">
            <Svg $size={10} viewBox="0 0 10 10"><path d="M1.500 1.500l7 7M8.500 1.500l-7 7" stroke="#999" strokeWidth="1.800" /></Svg>
          </IconButton>
        </WindowButtons>
      </TitleBar>

      <MenuBar>
        {menus.map((m, i) => (m ? <MenuItem key={i} type="button">{m}</MenuItem> : <MenuRule key={i} />))}
      </MenuBar>

      <Ribbon>
        <LogoButton type="button" aria-label="SoftFlot">
          <Svg $size={28} viewBox="0 0 28 28"><LogoArt /></Svg>
        </LogoButton>
        <RibbonRows>
          <Tools>
            <IconButton type="button" $w={25} aria-label="Modelo activo"><Icon name="clock" /></IconButton>
            <SelectBox $w={169} $h={24}>
              <Select aria-label="Modelo"><option>Interasystem 2014</option></Select>
            </SelectBox>
            <ToolRow
              cell={24} sep={5}
              items={["clockOff", "panelArrows", "photo", "gauge", "people", "|", "docPlus", "digits", "checklist", "form", "gear", "|", "book", "windows", "|"]}
            />
            <SelectBox $w={208} $h={24}>
              <Select aria-label="Empresas"><option>[Todas]</option></Select>
            </SelectBox>
            <ToolRow
              cell={24} sep={4}
              items={["home", "|", "globeEye", "|", "wrench", "coins", "help", "bug", "flag", "|", "chat", "door", "|"]}
            />
            <IconButton type="button" $w={40} aria-label="Más botones">
              <Svg $size={6} viewBox="0 0 6 6"><path d="M0 .5h6" stroke="#555" /><path d="M0 2.500h6L3 5.500z" fill="#555" /></Svg>
            </IconButton>
          </Tools>
          <Modules>
            {modules.map(([label, w]) => <ModuleTab key={label} type="button" $w={w}>{label}</ModuleTab>)}
          </Modules>
        </RibbonRows>
      </Ribbon>

      <Body>
        <Side>
          <Section label="Catálogos" />
          <Section label="Operación" />
          <Section label="Administraci..." open />
          <SideList>
            {adminItems.map(([icon, label]) => (
              <li key={label}>
                <SideLink href="#"><SideIcon name={icon} />{label}</SideLink>
              </li>
            ))}
          </SideList>
          <Section label="Logistica" />
          <Section label="Mantenimie..." />
          <Section label="Neumáticos" />
        </Side>
        <ScrollTrack aria-hidden="true">
          <Arrow $up /><ScrollThumb /><Arrow />
        </ScrollTrack>

        <Main>
          <DocTabs>
            <DocTab>
              Nota de Credito
              <IconButton type="button" $w={16} aria-label="Cerrar pestaña">
                <Svg $size={10} viewBox="0 0 10 10"><path d="M1.500 1.500l7 7M8.500 1.500l-7 7" stroke="#16a5ef" strokeWidth="1.500" /></Svg>
              </IconButton>
            </DocTab>
            <DocRest>
              <IconButton type="button" $w={16} $h={18} aria-label="Cerrar documento">
                <Svg $size={10} viewBox="0 0 10 10"><path d="M1.500 1.500l7 7M8.500 1.500l-7 7" stroke="#555" strokeWidth="1.800" /></Svg>
              </IconButton>
            </DocRest>
          </DocTabs>

          <DocTools>
            <ToolRow
              cell={23} sep={7}
              items={["dbAdd", "db", "dbDel", "|", "edit", "|", "stamp", "|", "card", "mail", "|", "binoculars", "funnel", "|"]}
            />
            <FilterLabel htmlFor="filtro">Filtro:</FilterLabel>
            <SelectBox $w={232} $h={22}>
              <Select id="filtro"><option>Ver Nota de Credito del mes activo</option></Select>
            </SelectBox>
            <ToolRow
              cell={23} sep={7}
              items={["|", "refresh", "|", "clipboard", "clip", "|", "tree", "treeAdd", "treeDel", "|", "excel", "report", "txt", "|", "preview", "printer"]}
            />
          </DocTools>

          <SubTabs>
            <SubTab type="button" $w={187} $on>Notas de Credito Moneda Nacional</SubTab>
            <SubTab type="button" $w={173}>Notas de Credito Estados Unidos</SubTab>
            <SubTab type="button" $w={138}>Notas de Credito Canada</SubTab>
            <SubTab type="button" $w={135}>Notas de Credito España</SubTab>
          </SubTabs>

          <GridPanel>
            <GridTable>
              <colgroup>
                <col style={{ width: 12 }} />
                {columns.map(([, w], i) => <col key={i} style={{ width: w }} />)}
              </colgroup>
              <thead>
                <tr>
                  <RowMark aria-label="Marca">
                    <Svg $size={8} viewBox="0 0 8 8"><path d="M4 .5v7M.5 4h7M1.500 1.500l5 5M6.500 1.500l-5 5" stroke="#666" strokeWidth=".8" /></Svg>
                  </RowMark>
                  {columns.map(([label, , align], i) => <Th key={i} $align={align}>{label}</Th>)}
                </tr>
              </thead>
              <tbody>
                <tr>
                  <RowMark aria-label="Fila activa">
                    <Svg $size={8} viewBox="0 0 8 8"><path d="M2 .5v7L5.500 4z" fill="#555" /></Svg>
                  </RowMark>
                  {row.map(([v, a], i) => <Td key={i} $align={a}>{v}</Td>)}
                </tr>
              </tbody>
            </GridTable>
            <Totals>
              <TotalBox $w={84}>$3,680.00</TotalBox>
              <TotalBox $w={72}>$588.80</TotalBox>
              <TotalBox $w={86}>$147.20</TotalBox>
              <TotalBox $w={74}>$4,121.60</TotalBox>
            </Totals>
          </GridPanel>
          <Count>Total 1 Registros</Count>
        </Main>
      </Body>

      <StatusBar>
        <StatusCell $w={101} />
        <StatusCell $w={355} $pad={5}>Empresa: Empresa ACME, S.A. de C.V.</StatusCell>
        <StatusCell $w={285}>Administrador: Soporte()</StatusCell>
        <StatusCell $w={85}>Access 2000</StatusCell>
        <StatusCell $w={55} />
        <StatusCell $w={55} />
        <Keys $w={130}>
          <Key>CAPS</Key><Key $on>NUM</Key><Key>SCRL</Key><Key>INS</Key>
        </Keys>
      </StatusBar>
    </Page>
  );
}
